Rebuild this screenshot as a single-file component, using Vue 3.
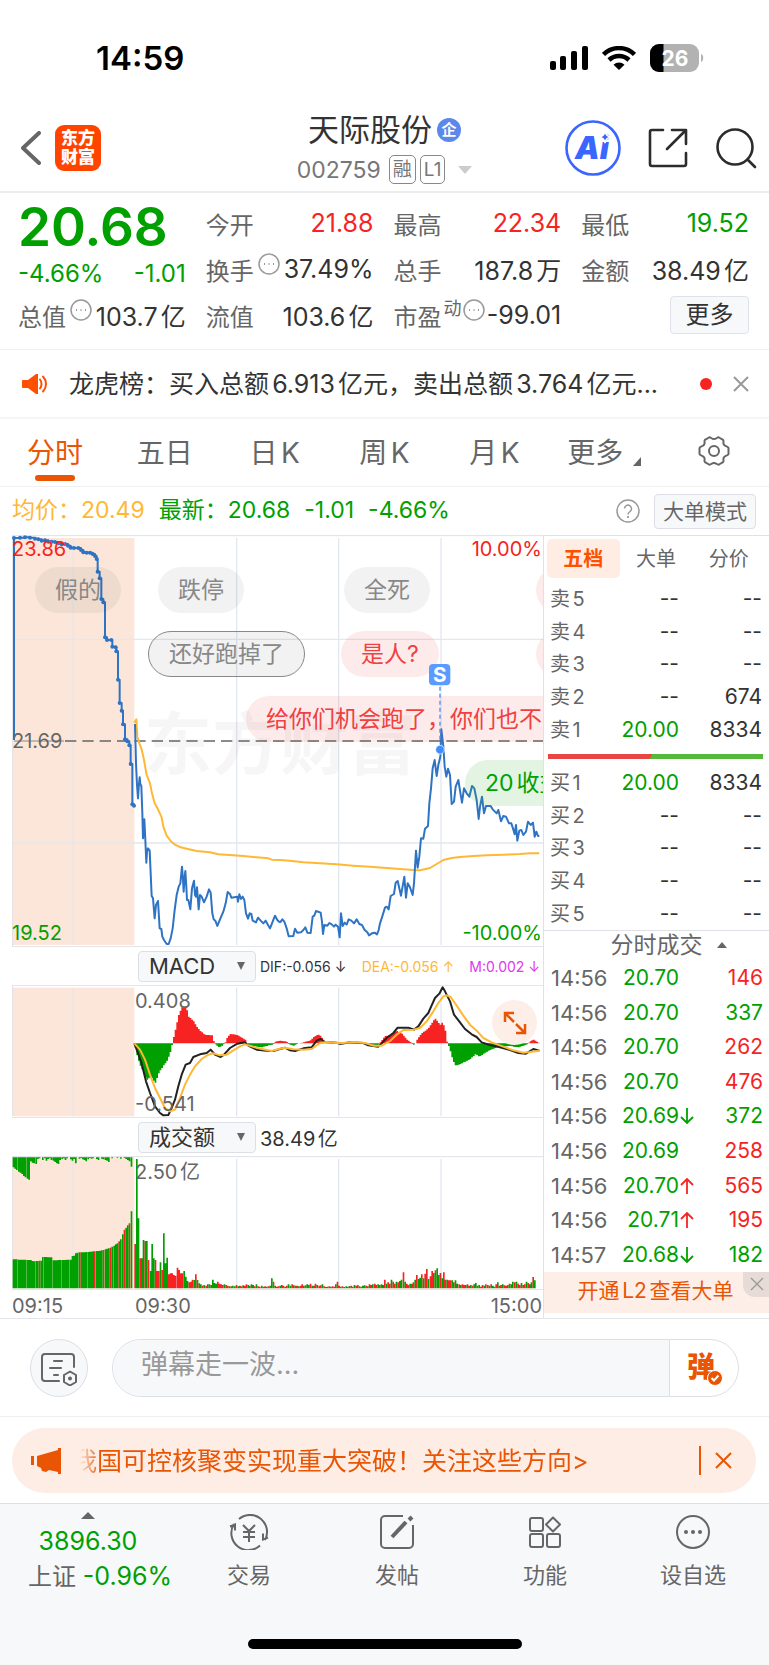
<script setup>
import { ref, computed } from 'vue'

const tabs = ['分时', '五日', '日K', '周K', '月K', '更多']
const activeTab = ref('分时')

const sideTabs = ['五档', '大单', '分价']
const activeSide = ref('五档')

const indicator = ref('MACD')
const volumeType = ref('成交额')
const message = ref('')

const sells = [
  { label: '卖5', price: '--', qty: '--' },
  { label: '卖4', price: '--', qty: '--' },
  { label: '卖3', price: '--', qty: '--' },
  { label: '卖2', price: '--', qty: '674' },
  { label: '卖1', price: '20.00', qty: '8334' }
]

const buys = [
  { label: '买1', price: '20.00', qty: '8334' },
  { label: '买2', price: '--', qty: '--' },
  { label: '买3', price: '--', qty: '--' },
  { label: '买4', price: '--', qty: '--' },
  { label: '买5', price: '--', qty: '--' }
]

const trades = [
  { time: '14:56', price: '20.70', dir: '', qty: 146, side: 'up' },
  { time: '14:56', price: '20.70', dir: '', qty: 337, side: 'down' },
  { time: '14:56', price: '20.70', dir: '', qty: 262, side: 'up' },
  { time: '14:56', price: '20.70', dir: '', qty: 476, side: 'up' },
  { time: '14:56', price: '20.69', dir: 'down', qty: 372, side: 'down' },
  { time: '14:56', price: '20.69', dir: '', qty: 258, side: 'up' },
  { time: '14:56', price: '20.70', dir: 'up', qty: 565, side: 'up' },
  { time: '14:56', price: '20.71', dir: 'up', qty: 195, side: 'up' },
  { time: '14:57', price: '20.68', dir: 'down', qty: 182, side: 'down' }
]

// 集合竞价
const auction = [
  [42, 24], [60, 23], [75, 22], [90, 23], [105, 26], [115, 28], [125, 32], [135, 31], [145, 35], [155, 35],
  [165, 36], [175, 40], [185, 43], [195, 42], [204, 47], [212, 53], [222, 54], [235, 54], [243, 60], [250, 67],
  [260, 68], [270, 68], [278, 72], [285, 78], [290, 87], [293, 125], [299, 145], [304, 207], [310, 217],
  [315, 322], [321, 330], [334, 330], [337, 350], [347, 352], [349, 364], [354, 449], [359, 519], [365, 542],
  [369, 583], [375, 628], [382, 634], [388, 646], [392, 702], [397, 823], [402, 827]
]
const auctionPath = computed(() =>
  'M42 630V24' + auction.map(([x, y]) => `H${x}V${y}`).join('')
)

// 分时价格，下午段 x 轴从 810 开始
const priceEarly = '405,582 408,700 411,765 414,805 417,760 419,742 421,762 424,768 427,850 429,925 431,900 433,868 436,930 439,998 441,965 444,955 449,962 452,1030 455,1098 459,1105 464,1165 468,1125 474,1113 479,1195 484,1197 487,1220 492,1230 500,1242 506,1242 512,1225 518,1195 524,1140 530,1095 536,1070 541,1060 546,1010 549,1050 551,1085 554,1040 556,1023 559,1070 561,1110 565,1110 571,1138 576,1075 582,1052 585,1095 588,1100 591,1072 596,1138 600,1095 605,1100 612,1117 620,1100 627,1078 632,1088 637,1150 641,1168 646,1172 652,1188 660,1168 670,1145 677,1120 683,1086 690,1092 694,1103 712,1100 714,1115 718,1093 723,1107 728,1100 733,1110 738,1150 744,1166 749,1150 754,1152 758,1172 768,1177 774,1163 782,1172 790,1180 797,1172 804,1185 810,1195 818,1175 825,1157 832,1170 840,1178'
const priceLate = '30,1178 37,1168 43,1175 50,1195 56,1219 70,1218 75,1196 82,1208 93,1207 100,1200 106,1192 112,1208 122,1209 128,1160 133,1157 138,1143 152,1148 156,1175 159,1212 163,1185 172,1187 178,1179 185,1183 192,1190 197,1184 204,1190 209,1222 213,1150 218,1188 224,1178 230,1184 236,1168 244,1172 252,1180 260,1168 268,1182 276,1185 284,1200 292,1207 297,1216 306,1210 314,1208 321,1213 326,1200 330,1180 336,1162 345,1133 350,1130 356,1138 362,1098 372,1092 377,1058 383,1053 393,1097 403,1040 408,1103 413,1060 420,1072 428,1095 432,1060 438,962 443,1013 448,980 453,925 460,926 465,896 474,888 478,820 483,775 488,715 494,690 500,738 505,705 511,680 514,598 520,650 524,710 529,740 534,716 540,735 545,822 552,815 557,770 565,750 570,782 576,818 582,775 590,790 598,800 606,768 613,775 620,810 626,867 630,830 636,800 642,850 648,828 662,828 668,838 680,850 685,840 693,874 700,858 708,860 717,880 724,880 731,902 734,913 738,885 742,932 748,902 754,900 760,915 768,905 774,875 782,885 789,878 794,920 799,905 804,918 808,918'
const avgEarly = '403,578 409,568 412,620 418,640 425,658 432,690 440,735 450,760 456,790 464,820 474,838 485,862 490,890 500,917 512,933 525,944 540,951 560,956 590,963 630,967 655,973 700,976 730,978 770,982 805,985 815,989 840,990'
const avgLate = '30,990 60,992 100,997 150,1000 200,1003 250,1007 300,1010 350,1014 390,1017 430,1020 450,1021 480,1014 495,1005 520,990 545,984 570,981 600,979 650,976 700,974 750,972 780,970 808,970'

// MACD
const difEarly = '403,311 412,335 425,372 438,425 450,460 465,500 480,520 490,527 505,526 515,505 525,480 535,440 545,405 557,375 570,370 580,352 600,344 620,340 632,330 645,345 662,352 672,345 690,325 712,312 735,308 745,318 770,330 800,333 820,334 840,328'
const difLate = '30,328 45,324 60,332 75,334 100,326 125,323 140,303 152,298 165,307 200,309 210,313 240,308 280,310 295,317 325,321 335,311 350,295 370,280 383,264 415,264 432,270 445,260 460,237 475,220 485,197 495,175 508,162 518,143 525,155 540,185 552,225 570,248 585,268 605,284 620,292 635,308 660,316 690,323 720,331 745,340 768,342 790,328 808,333'
const deaEarly = '403,311 420,330 435,360 450,405 465,445 480,475 495,505 510,515 525,510 540,475 555,435 570,405 585,380 605,358 625,345 640,341 660,347 680,345 700,332 720,320 735,314 755,320 775,326 815,334 840,327'
const deaLate = '30,327 45,324 70,329 100,330 125,328 150,310 170,307 210,311 250,307 285,310 310,318 335,318 360,304 380,285 400,271 430,270 450,265 470,245 490,215 505,190 520,170 530,167 542,172 560,198 580,228 600,255 620,273 640,295 665,308 700,321 730,332 760,339 780,337 808,333'

const hist = [
  [403, 0], [411, -35], [420, -65], [440, -110], [452, -100], [466, -118], [478, -85], [492, -65], [500, -55],
  [510, -30], [516, -5], [520, 15], [527, 45], [536, 85], [545, 108], [558, 110], [566, 80], [580, 68],
  [590, 50], [600, 38], [615, 26], [636, 24], [643, 0], [648, -5], [657, -12], [668, -6], [675, 0], [680, 15],
  [690, 28], [710, 26], [725, 18], [738, 10], [742, -3], [760, -8], [785, -12], [800, -8], [820, -3], [826, 5],
  [840, 8], [860, 5], [865, -2], [880, -8], [890, -2], [905, 2], [930, 8], [940, 18], [955, 27], [965, 20],
  [970, 5], [980, 2], [1010, 1], [1020, -4], [1030, 1], [1080, 2], [1095, 1], [1110, -3], [1135, -6],
  [1142, 5], [1155, 22], [1170, 25], [1190, 37], [1205, 30], [1220, 12], [1232, 3], [1238, -4], [1245, -3],
  [1250, 10], [1265, 30], [1285, 45], [1295, 60], [1305, 75], [1313, 65], [1320, 55], [1327, 63], [1335, 45],
  [1340, 8], [1345, -5], [1350, -20], [1358, -50], [1367, -68], [1385, -60], [1410, -48], [1427, -32],
  [1438, -40], [1460, -25], [1490, -12], [1530, -8], [1555, -12], [1580, -4], [1588, 4], [1600, 12],
  [1610, 5], [1618, 1]
]

const valueAt = (list, x) => {
  for (let i = 1; i < list.length; i++) {
    const [x1, y1] = list[i]
    const [x0, y0] = list[i - 1]
    if (x <= x1) return y0 + ((y1 - y0) * (x - x0)) / (x1 - x0)
  }
  return list[list.length - 1][1]
}

const histBars = computed(() => {
  let red = ''
  let green = ''
  for (let x = 404; x < 1618; x += 5) {
    const v = Math.round(valueAt(hist, x + 2))
    if (v > 0) red += `M${x} 311v${-v}h5v${v}z`
    if (v < 0) green += `M${x} 311v${-v}h5v${v}z`
  }
  return { red, green }
})

// 竞价量
const auctionVol = [
  [38, 958], [90, 960], [96, 964], [122, 962], [126, 951], [152, 952], [156, 961], [210, 959], [214, 948],
  [222, 946], [226, 938], [260, 936], [300, 932], [330, 923], [350, 910], [362, 895], [370, 870], [378, 860],
  [386, 850], [391, 825], [396, 770]
]
const auctionRed = [15, 39, 47, 52, 56, 61, 64, 67]
const unmatched = [30, 34, 38, 43, 46, 50, 56, 60, 64, 67, 12, 16, 18, 20, 5, 3, 0, 8, 3, 10, 5, 3, 8, 10, 14, 18, 20, 8, 5, 3, 8, 3, 0, 6, 10, 5, 18, 0, 4, 2, 6, 8, 12, 6, 2, 4, 3, 0, 5, 8, 0, 4, 6, 8, 10, 14, 0, 3, 0, 0, 2, 0, 4, 0, 2, 5, 8, 12, 28]

// 成交额
const volume = [
  133, 388, 210, 90, 90, 145, 142, 142, 85, 52, 133, 90, 85, 52, 52, 78, 55, 165, 75, 92,
  42, 45, 45, 40, 38, 62, 55, 45, 45, 52, 35, 22, 18, 20, 26, 25, 42, 25, 15, 12,
  8, 10, 8, 12, 12, 10, 26, 16, 14, 20, 14, 12, 10, 12, 10, 8, 6, 6, 8, 6,
  10, 6, 8, 6, 9, 8, 12, 10, 8, 12, 10, 6, 12, 6, 5, 8, 5, 6, 5, 6,
  8, 30, 20, 8, 5, 6, 8, 10, 8, 5, 8, 12, 8, 12, 9, 8, 8, 6, 8, 12,
  8, 9, 12, 10, 14, 8, 8, 14, 10, 8, 9, 12, 6, 4, 5, 6, 5, 6, 5, 12,
  20, 8, 5, 6, 4, 6, 5, 7, 8, 5, 10, 8, 10, 6, 5, 8, 9, 8, 6, 12,
  10, 12, 14, 10, 12, 10, 12, 10, 26, 14, 18, 14, 26, 20, 14, 20, 18, 22, 26, 48,
  20, 14, 10, 14, 14, 18, 26, 40, 28, 32, 42, 30, 44, 58, 28, 36, 52, 46, 54, 60,
  40, 46, 30, 48, 26, 26, 24, 24, 24, 18, 24, 14, 12, 10, 12, 10, 10, 12, 8, 10,
  8, 12, 16, 8, 10, 5, 10, 8, 12, 10, 8, 12, 8, 5, 12, 18, 8, 10, 12, 9,
  8, 10, 14, 12, 20, 18, 20, 14, 10, 16, 10, 12, 20, 16, 12, 18, 34, 24
]
const openColors = 'rggrggrgrgggrrrgrgggrrrrrrrrrgggrrrgrgrgrgrgrggggrrr'

const volumeBars = computed(() => {
  let red = ''
  let green = ''
  for (let i = 0; i < 69; i++) {
    const x = Math.round(38 + i * 5.2)
    const h = 1045 - Math.round(valueAt(auctionVol, x))
    const bar = `M${x} 1045v${-h}h5v${h}z`
    if (auctionRed.includes(i)) red += bar
    else green += bar
    green += `M${x} 652v${unmatched[i]}h5v${-unmatched[i]}z`
  }
  volume.forEach((h, i) => {
    const x = Math.round(403 + i * 5.06)
    const bar = `M${x} 1045v${-h}h5v${h}z`
    const isRed = i < openColors.length ? openColors[i] === 'r' : (i * 7) % 11 < 6
    if (isRed) red += bar
    else green += bar
  })
  return { red, green }
})
</script>

<template>
  <div class="page">
    <div class="status">
      <span class="clock">14:59</span>
      <div class="status-icons">
        <svg width="38" height="24" viewBox="0 0 38 24">
          <rect x="0" y="15" width="6" height="9" rx="2" />
          <rect x="10" y="10" width="6" height="14" rx="2" />
          <rect x="21" y="5" width="6" height="19" rx="2" />
          <rect x="32" y="0" width="6" height="24" rx="2" />
        </svg>
        <svg width="34" height="24" viewBox="0 0 34 24">
          <path d="M1.500 8.500a22 22 0 0 1 31 0" fill="none" stroke="#000" stroke-width="4.500" />
          <path d="M7 14a14.500 14.500 0 0 1 20 0" fill="none" stroke="#000" stroke-width="4.500" />
          <path d="M17 24l-5.500-5.300a8 8 0 0 1 11 0z" />
        </svg>
        <svg width="54" height="28" viewBox="0 0 54 28">
          <rect width="49" height="28" rx="9" fill="#b2b2b2" />
          <path d="M9 0h4.500v28H9a9 9 0 0 1-9-9V9a9 9 0 0 1 9-9z" />
          <path d="M51 10c3 1 3 7 0 8z" fill="#b2b2b2" />
          <text x="25" y="22" text-anchor="middle" class="battery-text">26</text>
        </svg>
      </div>
    </div>

    <header class="header">
      <div class="head-left">
        <button class="plain" aria-label="返回">
          <svg width="20" height="34" viewBox="0 0 20 34">
            <path d="M18 2L2 17l16 15" fill="none" stroke="#666" stroke-width="4" stroke-linecap="round" stroke-linejoin="round" />
          </svg>
        </button>
        <div class="logo">东方<br>财富</div>
      </div>
      <div class="head-title">
        <h1>天际股份<span class="corp">企</span></h1>
        <div class="code">
          002759
          <span class="tags"><span class="tag">融</span><span class="tag">L1</span></span>
          <svg width="14" height="8" viewBox="0 0 14 8"><path d="M0 0h14L7 8z" fill="#ccc" /></svg>
        </div>
      </div>
      <div class="head-right">
        <button class="plain" aria-label="AI">
          <svg width="56" height="56" viewBox="0 0 56 56">
            <circle cx="28" cy="28" r="26.500" fill="none" stroke="#3a66ff" stroke-width="2.600" />
            <text x="27" y="39" text-anchor="middle" class="ai-text">Ai</text>
            <path d="M40 11c1 4 2 5 6 6-4 1-5 2-6 6-1-4-2-5-6-6 4-1 5-2 6-6z" fill="#3a66ff" stroke="#fff" stroke-width="1.500" />
          </svg>
        </button>
        <button class="plain" aria-label="分享">
          <svg width="40" height="40" viewBox="0 0 40 40" fill="none" stroke="#2c2c2c" stroke-width="2.600" stroke-linecap="round" stroke-linejoin="round">
            <path d="M15 2H4a2 2 0 0 0-2 2v32a2 2 0 0 0 2 2h32a2 2 0 0 0 2-2V25M24 2h14v14M37 3L19 21" />
          </svg>
        </button>
        <button class="plain" aria-label="搜索">
          <svg width="42" height="42" viewBox="0 0 42 42" fill="none" stroke="#2c2c2c" stroke-width="2.600" stroke-linecap="round">
            <circle cx="20" cy="20" r="17.500" />
            <path d="M32.500 32.500L40 40" />
          </svg>
        </button>
      </div>
    </header>

    <section class="quote">
      <div class="quote-col">
        <div class="price">20.68</div>
        <div class="change green"><span>-4.66%</span><span>-1.01</span></div>
        <div class="item">
          <span>总值</span>
          <svg class="dots" viewBox="0 0 22 22"><circle cx="11" cy="11" r="10" /><path d="M6 11h1M10.500 11h1M15 11h1" /></svg>
          <b>103.7亿</b>
        </div>
      </div>
      <div class="quote-col">
        <div class="item"><span>今开</span><b class="red">21.88</b></div>
        <div class="item">
          <span>换手</span>
          <svg class="dots" viewBox="0 0 22 22"><circle cx="11" cy="11" r="10" /><path d="M6 11h1M10.500 11h1M15 11h1" /></svg>
          <b>37.49%</b>
        </div>
        <div class="item"><span>流值</span><b>103.6亿</b></div>
      </div>
      <div class="quote-col">
        <div class="item"><span>最高</span><b class="red">22.34</b></div>
        <div class="item"><span>总手</span><b>187.8万</b></div>
        <div class="item">
          <span>市盈</span><sup>动</sup>
          <svg class="dots tight" viewBox="0 0 22 22"><circle cx="11" cy="11" r="10" /><path d="M6 11h1M10.500 11h1M15 11h1" /></svg>
          <b>-99.01</b>
        </div>
      </div>
      <div class="quote-col">
        <div class="item"><span>最低</span><b class="green">19.52</b></div>
        <div class="item"><span>金额</span><b>38.49亿</b></div>
        <div class="item"><button class="more">更多</button></div>
      </div>
    </section>

    <div class="news">
      <svg width="26" height="22" viewBox="0 0 26 22">
        <path d="M1 7h5l8-6h2v20h-2l-8-6H1a1 1 0 0 1-1-1V8a1 1 0 0 1 1-1z" fill="#ff5000" />
        <path d="M18 6.500c2 2.500 2 6.500 0 9M21 3.500c4 4.500 4 10.500 0 15" fill="none" stroke="#ff5000" stroke-width="2" stroke-linecap="round" />
      </svg>
      <a href="#" class="news-text">龙虎榜：买入总额6.913亿元，卖出总额3.764亿元...</a>
      <i class="dot"></i>
      <button class="plain" aria-label="关闭">
        <svg width="16" height="16" viewBox="0 0 16 16"><path d="M1 1l14 14M15 1L1 15" stroke="#999" stroke-width="2" /></svg>
      </button>
    </div>

    <nav class="tabs">
      <button v-for="t in tabs" :key="t" class="tab" :class="{ active: t === activeTab }" @click="activeTab = t">
        <span>{{ t }}</span>
        <svg v-if="t === '更多'" width="8" height="9" viewBox="0 0 8 9"><path d="M8 0v9H0z" fill="#666" /></svg>
      </button>
      <button class="tab" aria-label="设置">
        <svg width="32" height="30" viewBox="0 0 32 30" fill="none" stroke="#666" stroke-width="2">
          <path d="M11 1.500c1.500-.8 2.500 1.500 5 1.500s3.500-2.300 5-1.500l4 2.300c1.300 1-.3 2.700.8 4.700 1.200 2.200 4.200 1.500 4.700 3.500v6c-.5 2-3.500 1.300-4.700 3.500-1.100 2 .5 3.700-.8 4.700l-4 2.300c-1.500.8-2.500-1.500-5-1.500s-3.500 2.300-5 1.500l-4-2.300c-1.300-1 .3-2.700-.8-4.700C5 19.300 2 20 1.500 18v-6c.5-2 3.500-1.300 4.700-3.500 1.100-2-.5-3.700.8-4.700z" />
          <circle cx="16" cy="15" r="5" />
        </svg>
      </button>
    </nav>

    <div class="summary">
      <span class="yellow">均价：20.49</span>
      <span class="green">最新：20.68</span>
      <span class="green">-1.01</span>
      <span class="green">-4.66%</span>
      <button class="plain help" aria-label="帮助">
        <svg width="24" height="24" viewBox="0 0 24 24" fill="none" stroke="#999">
          <circle cx="12" cy="12" r="11" stroke-width="1.500" />
          <path d="M8.500 9.500a3.500 3.500 0 1 1 5.500 3c-1.500 1-2 1.500-2 3" stroke-width="1.500" />
          <path d="M12 17v2" stroke-width="1.800" />
        </svg>
      </button>
      <button class="mode">大单模式</button>
    </div>

    <main class="board">
      <div class="charts">
        <div class="panel">
          <svg class="plot" viewBox="36 15 1593 1236">
            <rect x="38" y="24" width="365" height="1221" fill="#fce6da" />
            <path d="M219 24V1245M710 24V1245M1016 24V1245M1323 24V1245M36 328H1629M36 939H1629" class="grid" />
            <path d="M36 17H1629M38 17V1250M36 1250H1629" class="frame" />
            <text x="432" y="716" class="watermark">东方财富</text>
            <path d="M195 633H1629" stroke="#666" stroke-width="4" stroke-dasharray="34 18" fill="none" />
            <path d="M42 633h150" stroke="#888" stroke-width="3" />
            <polyline :points="avgEarly" class="line avg" />
            <polyline :points="avgLate" class="line avg" transform="translate(810 0)" />
            <path :d="auctionPath" class="line price-line" />
            <circle v-for="p in auction" :key="p[0]" :cx="p[0]" :cy="p[1]" r="6" fill="#2f74c4" />
            <polyline :points="priceEarly" class="line price-line" />
            <polyline :points="priceLate" class="line price-line" transform="translate(810 0)" />
          </svg>
          <span class="label top left red">23.86</span>
          <span class="label middle left">21.69</span>
          <span class="label bottom left green">19.52</span>
          <span class="label top right red">10.00%</span>
          <span class="label bottom right green">-10.00%</span>
          <div class="danmu">
            <span class="pill r1 a">假的</span>
            <span class="pill r1 b">跌停</span>
            <span class="pill r1 c">全死</span>
            <span class="pill r1 d hot"></span>
            <span class="pill r2 e mine">还好跑掉了</span>
            <span class="pill r2 f hot">是人?</span>
            <span class="pill r2 d hot"></span>
            <span class="pill r3 g hot">给你们机会跑了，你们也不</span>
            <span class="pill r4 h cool">20收益</span>
          </div>
          <svg class="plot marker" viewBox="36 15 1593 1236">
            <path d="M1320 470V640" stroke="#4a8ff5" stroke-width="4" stroke-dasharray="12 9" />
            <circle cx="1320" cy="659" r="13" fill="#3f8cff" stroke="#fff" stroke-width="2" />
            <rect x="1287" y="402" width="64" height="64" rx="12" fill="#5b9bff" />
            <text x="1319" y="456" text-anchor="middle" class="marker-text">S</text>
          </svg>
        </div>

        <div class="tool">
          <div class="picker">
            <select v-model="indicator" aria-label="指标"><option>MACD</option><option>KDJ</option></select>
            <svg width="8" height="8" viewBox="0 0 8 8"><path d="M0 0h8L4 8z" fill="#666" /></svg>
          </div>
          <div class="macd-values">
            <span>DIF:-0.056 ↓</span>
            <span class="yellow">DEA:-0.056 ↑</span>
            <span class="magenta">M:0.002 ↓</span>
          </div>
        </div>

        <div class="panel">
          <svg class="plot" viewBox="36 136 1593 399">
            <rect x="38" y="144" width="365" height="386" fill="#fce6da" />
            <path d="M219 144V530M710 144V530M1016 144V530M1323 144V530" class="grid" />
            <path d="M36 137H1629M38 137V530M36 534H1629" class="frame" />
            <path :d="histBars.red" fill="#f72323" />
            <path :d="histBars.green" fill="#00a000" />
            <polyline :points="difEarly" class="line dif" />
            <polyline :points="difLate" class="line dif" transform="translate(810 0)" />
            <polyline :points="deaEarly" class="line avg" />
            <polyline :points="deaLate" class="line avg" transform="translate(810 0)" />
          </svg>
          <span class="label top open">0.408</span>
          <span class="label bottom open">-0.541</span>
          <button class="expand" aria-label="放大">
            <svg width="24" height="24" viewBox="0 0 24 24" fill="none" stroke="#ea5504" stroke-width="2.500">
              <path d="M11 2H2v9M2 2l9 9M22 13v9h-9M22 22l-9-9" />
            </svg>
          </button>
        </div>

        <div class="tool">
          <div class="picker">
            <select v-model="volumeType" aria-label="成交"><option>成交额</option><option>成交量</option></select>
            <svg width="8" height="8" viewBox="0 0 8 8"><path d="M0 0h8L4 8z" fill="#666" /></svg>
          </div>
          <span class="turnover">38.49亿</span>
        </div>

        <div class="panel">
          <svg class="plot" viewBox="36 648 1593 402">
            <rect x="38" y="652" width="365" height="393" fill="#fce6da" />
            <path d="M219 656V1045M710 656V1045M1016 656V1045M1323 656V1045" class="grid" />
            <path d="M36 650H1629M38 650V1045M36 1049H1629" class="frame" />
            <path :d="volumeBars.red" fill="#f72323" />
            <path :d="volumeBars.green" fill="#00a000" />
          </svg>
          <span class="label top open">2.50亿</span>
        </div>
        <div class="axis">
          <span>09:15</span>
          <span class="axis-open">09:30</span>
          <span>15:00</span>
        </div>
      </div>

      <aside class="side">
        <div class="side-tabs">
          <button v-for="t in sideTabs" :key="t" :class="{ active: t === activeSide }" @click="activeSide = t">{{ t }}</button>
        </div>
        <table class="levels">
          <tr v-for="r in sells" :key="r.label">
            <td>{{ r.label }}</td>
            <td :class="{ green: r.price !== '--' }">{{ r.price }}</td>
            <td>{{ r.qty }}</td>
          </tr>
        </table>
        <div class="ratio"></div>
        <table class="levels">
          <tr v-for="r in buys" :key="r.label">
            <td>{{ r.label }}</td>
            <td :class="{ green: r.price !== '--' }">{{ r.price }}</td>
            <td>{{ r.qty }}</td>
          </tr>
        </table>
        <button class="deal-head">
          分时成交
          <svg width="10" height="6" viewBox="0 0 10 6"><path d="M0 6h10L5 0z" fill="#666" /></svg>
        </button>
        <table class="deals">
          <tr v-for="(t, i) in trades" :key="i">
            <td>{{ t.time }}</td>
            <td class="green">{{ t.price }}</td>
            <td class="arrow">
              <svg v-if="t.dir === 'down'" width="14" height="16" viewBox="0 0 14 16"><path d="M7 0v15M1 9l6 6 6-6" stroke="#00a000" /></svg>
              <svg v-if="t.dir === 'up'" width="14" height="16" viewBox="0 0 14 16"><path d="M7 16V1M1 7l6-6 6 6" stroke="#f72323" /></svg>
            </td>
            <td :class="t.side === 'up' ? 'red' : 'green'">{{ t.qty }}</td>
          </tr>
        </table>
        <div class="l2">
          <a href="#">开通L2查看大单</a>
          <button aria-label="关闭">
            <svg width="14" height="14" viewBox="0 0 14 14"><path d="M1 1l12 12M13 1L1 13" stroke="#999" stroke-width="1.300" /></svg>
          </button>
        </div>
      </aside>
    </main>

    <div class="chat">
      <button class="chat-set" aria-label="弹幕设置">
        <svg width="36" height="33" viewBox="0 0 36 33" fill="none" stroke="#666" stroke-width="2" stroke-linecap="round">
          <path d="M18 28H4a3 3 0 0 1-3-3V4a3 3 0 0 1 3-3h26a3 3 0 0 1 3 3v10M13 8h8M9 15h11M13 22h4" />
          <path d="M29 18.500l6 3.500v7l-6 3.500-6-3.500v-7z" stroke-linejoin="round" />
          <circle cx="29" cy="25.500" r="1" fill="#666" />
        </svg>
      </button>
      <div class="chat-box">
        <input v-model="message" placeholder="弹幕走一波..." aria-label="弹幕">
        <button class="send" aria-label="弹">
          <span>弹</span>
          <svg width="16" height="16" viewBox="0 0 16 16">
            <circle cx="8" cy="8" r="7.500" fill="#ea5504" stroke="#fff" />
            <path d="M4.500 8l2.500 2.500 4.500-5" fill="none" stroke="#fff" stroke-width="2" />
          </svg>
        </button>
      </div>
    </div>

    <div class="promo-row">
      <div class="promo">
        <svg width="30" height="26" viewBox="0 0 30 26" fill="#ea5504">
          <path d="M0 8h3v9H0zM6 8l21-6V0h3v26h-3v-2l-9-2-3 2-4-1-1-3-4-2z" />
        </svg>
        <a href="#" class="ticker"><span>我国可控核聚变实现重大突破！关注这些方向&gt;</span></a>
        <i></i>
        <button class="plain" aria-label="关闭">
          <svg width="17" height="17" viewBox="0 0 17 17"><path d="M1 1l15 15M16 1L1 16" stroke="#ea5504" stroke-width="2" /></svg>
        </button>
      </div>
    </div>

    <footer class="dock">
      <div class="bar">
        <button class="index">
          <svg width="14" height="7" viewBox="0 0 14 7"><path d="M0 7h14L7 0z" fill="#666" /></svg>
          <span class="green">3896.30</span>
          <span class="index-line">上证 <span class="green">-0.96%</span></span>
        </button>
        <button class="entry">
          <svg width="40" height="36" viewBox="0 0 40 36" fill="none" stroke="#666" stroke-width="2">
            <path d="M10 5a17 17 0 0 1 26 21M31 31.500A17 17 0 0 1 5 10M1 12.500l5-2v6M39 23.500l-5 2v-6M14 11l6 6 6-6M14 18h12M14 23h12M20 17v11" />
          </svg>
          交易
        </button>
        <button class="entry">
          <svg width="36" height="36" viewBox="0 0 36 36" fill="none" stroke="#666" stroke-width="2">
            <path d="M24 2H6a4 4 0 0 0-4 4v24a4 4 0 0 0 4 4h24a4 4 0 0 0 4-4V11" />
            <path d="M13 23L27 8" stroke-width="4" /><path d="M30 6l3-3" stroke-width="4" />
          </svg>
          发帖
        </button>
        <button class="entry">
          <svg width="36" height="36" viewBox="0 0 36 36" fill="none" stroke="#666" stroke-width="2" stroke-linejoin="round">
            <rect x="3" y="4" width="13" height="13" rx="2" />
            <rect x="3" y="20" width="13" height="13" rx="2" />
            <rect x="20" y="20" width="13" height="13" rx="2" />
            <path d="M26 3.500l7 7-7 7-7-7z" />
          </svg>
          功能
        </button>
        <button class="entry">
          <svg width="36" height="36" viewBox="0 0 36 36" fill="none" stroke="#666" stroke-width="2">
            <circle cx="18" cy="18" r="16" />
            <g fill="#666" stroke="none"><circle cx="11" cy="18" r="2" /><circle cx="18" cy="18" r="2" /><circle cx="25" cy="18" r="2" /></g>
          </svg>
          设自选
        </button>
      </div>
      <div class="home"></div>
    </footer>
  </div>
</template>

<style>
body {
  margin: 0;
  background: #fff;
}
</style>

<style scoped>
.page {
  font-family: Inter, "Noto Sans CJK SC", sans-serif;
  color: #333;
  text-autospace: normal;
  overflow: hidden;
}

.page * {
  box-sizing: border-box;
}

svg {
  display: block;
  flex: none;
}

button,
input,
select {
  font-family: inherit;
  color: inherit;
  padding: 0;
  margin: 0;
  border: 0;
  background: none;
}

a {
  color: inherit;
  text-decoration: none;
}

.plain {
  display: block;
}

.red {
  color: #f72323 !important;
}

.green {
  color: #00a000 !important;
}

.yellow {
  color: #ffb834;
}

.magenta {
  color: #e335ef;
}

/* 状态栏 */
.status {
  height: 100px;
  padding: 15px 65px 0 96px;
  display: flex;
  align-items: center;
  justify-content: space-between;
}

.clock {
  color: #000;
  font-size: 33px;
  font-weight: 600;
}

.status-icons {
  display: flex;
  align-items: center;
  gap: 14px;
}

.battery-text {
  font-size: 21px;
  font-weight: 700;
  fill: #fff;
}

/* 标题栏 */
.header {
  height: 93px;
  padding: 4px 12px 0;
  display: grid;
  grid-template-columns: 1fr auto 1fr;
  align-items: center;
  border-bottom: 2px solid #ededed;
}

.head-left {
  display: flex;
  align-items: center;
  gap: 14px;
  padding-left: 9px;
}

.logo {
  width: 46px;
  height: 46px;
  border-radius: 9px;
  background: #ff4400;
  color: #fff;
  font-size: 17px;
  font-weight: 900;
  line-height: 19px;
  padding-top: 4px;
  text-align: center;
}

.head-title {
  display: flex;
  flex-direction: column;
  align-items: center;
}

h1 {
  margin: 0;
  display: flex;
  align-items: center;
  gap: 5px;
  font-size: 31px;
  font-weight: 400;
  line-height: 44px;
}

.corp {
  width: 24px;
  height: 24px;
  border-radius: 50%;
  background: #5b88ea;
  color: #fff;
  font-size: 15px;
  font-weight: 700;
  line-height: 24px;
  text-align: center;
}

.code {
  display: flex;
  align-items: center;
  gap: 8px;
  font-size: 23px;
  line-height: 36px;
  color: #777;
}

.tags {
  display: flex;
  gap: 4px;
  margin-right: 5px;
}

.tag {
  height: 29px;
  padding: 0 3px;
  border: 1px solid #888;
  border-radius: 5px;
  font-size: 19px;
  line-height: 27px;
}

.head-right {
  display: flex;
  align-items: center;
  justify-content: flex-end;
  gap: 27px;
}

.ai-text {
  font-size: 31px;
  font-weight: 900;
  font-style: italic;
  fill: #3a66ff;
}

/* 行情 */
.quote {
  display: grid;
  grid-template-columns: repeat(4, minmax(0, 1fr));
  gap: 20px;
  height: 157px;
  padding: 7px 20px 0 18px;
  border-bottom: 1px solid #f0f0f0;
}

.price {
  color: #00a000;
  font-size: 53px;
  font-weight: 600;
  line-height: 54px;
}

.change {
  height: 38px;
  display: flex;
  align-items: center;
  justify-content: space-between;
  font-size: 24px;
}

.item {
  height: 46px;
  display: flex;
  align-items: center;
  font-size: 24px;
  white-space: nowrap;
  color: #666;
}

.item b {
  margin-left: auto;
  font-size: 25px;
  font-weight: 400;
  color: #333;
}

.item sup {
  font-size: 18px;
  line-height: 18px;
  align-self: flex-start;
  margin: 8px 0 0 2px;
}

.dots {
  width: 22px;
  height: 22px;
  margin: 0 0 10px 4px;
  fill: none;
  stroke: #999;
  stroke-width: 1.5;
}

.dots path {
  stroke-width: 2;
}

.dots.tight {
  margin-left: 1px;
}

.more {
  width: 79px;
  height: 38px;
  margin-left: auto;
  border: 1px solid #dfe2ea;
  border-radius: 4px;
  background: #f7f8fa;
  font-size: 24px;
  line-height: 34px;
  color: #333;
}

/* 公告 */
.news {
  height: 69px;
  padding: 0 20px 0 22px;
  display: flex;
  align-items: center;
  border-bottom: 2px solid #f5f5f5;
}

.news-text {
  flex: 1;
  margin-left: 21px;
  padding-bottom: 3px;
  font-size: 25px;
  white-space: nowrap;
  overflow: hidden;
}

.dot {
  width: 12px;
  height: 12px;
  border-radius: 50%;
  background: #f72323;
  margin-right: 21px;
}

/* 周期 */
.tabs {
  height: 68px;
  display: grid;
  grid-template-columns: repeat(7, minmax(0, 1fr));
  border-bottom: 1px solid #f0f0f0;
}

.tab {
  position: relative;
  display: flex;
  align-items: center;
  justify-content: center;
  gap: 10px;
  padding-bottom: 3px;
  font-size: 28px;
  color: #666;
}

.tab span + svg {
  align-self: flex-end;
  margin-bottom: 17px;
}

.tab.active {
  color: #ea5504;
}

.tab.active::after {
  content: "";
  position: absolute;
  bottom: 5px;
  left: 50%;
  width: 40px;
  height: 6px;
  margin-left: -20px;
  border-radius: 3px;
  background: #ea5504;
}

.summary {
  height: 48px;
  padding: 0 13px 0 12px;
  display: flex;
  align-items: center;
  gap: 14px;
  font-size: 23px;
  line-height: 30px;
  white-space: nowrap;
}

.summary span {
  padding-bottom: 2px;
}

.help {
  margin-left: auto;
}

.mode {
  height: 35px;
  padding: 0 8px;
  border: 1px solid #dcdfe6;
  border-radius: 4px;
  background: #f7f8fa;
  font-size: 21px;
  line-height: 31px;
  color: #666;
}

/* 图表区 */
.board {
  padding-left: 12px;
  display: grid;
  grid-template-columns: minmax(0, 531fr) minmax(0, 226fr);
  border-bottom: 1px solid #e3e5ea;
}

.panel {
  position: relative;
  overflow: hidden;
}

.plot {
  width: 100%;
}

.grid {
  fill: none;
  stroke: #e3e7f1;
  stroke-width: 4;
}

.frame {
  fill: none;
  stroke: #dfe1e6;
  stroke-width: 3;
}

.line {
  fill: none;
  stroke-width: 6;
  stroke-linejoin: round;
}

.avg {
  stroke: #ffb834;
}

.price-line {
  stroke: #2f74c4;
}

.dif {
  stroke: #222;
}

.watermark {
  font-size: 204px;
  font-weight: 700;
  fill: #000;
  fill-opacity: 0.035;
}

.marker {
  position: absolute;
  top: 0;
  left: 0;
}

.marker-text {
  font-size: 62px;
  font-weight: 700;
  fill: #fff;
}

.label {
  position: absolute;
  font-size: 20px;
  line-height: 24px;
  color: #666;
}

.label.top {
  top: 2px;
}

.label.middle {
  top: 50%;
  margin-top: -12px;
}

.label.bottom {
  bottom: 2px;
}

.label.left {
  left: 0;
}

.label.right {
  right: 1px;
}

.label.open {
  left: 123px;
}

.label.top.open {
  top: 4px;
}

/* 弹幕 */
.pill {
  position: absolute;
  height: 46px;
  min-width: 60px;
  padding: 0 20px;
  border-radius: 23px;
  background: rgba(0, 0, 0, 0.05);
  font-size: 23px;
  line-height: 46px;
  color: #888;
  white-space: nowrap;
}

.pill.hot {
  background: rgba(235, 60, 60, 0.1);
  color: #f04040;
}

.pill.cool {
  background: rgba(60, 180, 60, 0.14);
  color: #00a000;
}

.pill.mine {
  border: 1px solid #888;
  line-height: 44px;
}

.r1 { top: 32px; }
.r2 { top: 96px; }
.r3 { top: 161px; }
.r4 { top: 225px; }
.a { left: 23px; }
.b { left: 146px; }
.c { left: 332px; }
.d { left: 524px; }
.e { left: 136px; }
.f { left: 329px; }
.g { left: 234px; }
.h { left: 453px; }

.tool {
  height: 38px;
  padding-left: 126px;
  display: flex;
  align-items: center;
  gap: 4px;
}

.picker {
  position: relative;
  flex: none;
}

.picker select {
  display: block;
  appearance: none;
  width: 118px;
  height: 31px;
  padding-left: 10px;
  border: 1px solid #dcdfe6;
  border-radius: 4px;
  background: #f7f8fa;
  font-size: 22px;
}

.picker svg {
  position: absolute;
  right: 11px;
  top: 11px;
}

.macd-values {
  flex: 1;
  display: flex;
  justify-content: space-between;
  padding-right: 3px;
  font-size: 14px;
  white-space: nowrap;
}

.turnover {
  font-size: 20px;
}

.expand {
  position: absolute;
  top: 15px;
  right: 6px;
  width: 45px;
  height: 45px;
  border-radius: 50%;
  background: #fdefe8;
  display: flex;
  align-items: center;
  justify-content: center;
}

.axis {
  height: 28px;
  display: flex;
  align-items: center;
  font-size: 20px;
  color: #666;
  padding: 3px 1px 0 0;
}

.axis span:first-child {
  width: 123px;
}

.axis-open {
  flex: 1;
}

/* 盘口 */
.side {
  min-width: 0;
  border-left: 1px solid #dfe1e6;
  border-top: 1px solid #dfe1e6;
}

.side-tabs {
  display: grid;
  grid-template-columns: repeat(3, minmax(0, 1fr));
  padding: 3px 4px 0 3px;
}

.side-tabs button {
  height: 39px;
  border-radius: 5px;
  font-size: 20px;
  line-height: 36px;
  color: #666;
}

.side-tabs .active {
  background: #ffece3;
  color: #ff5000;
  font-weight: 700;
}

table {
  width: 100%;
  border-collapse: collapse;
  table-layout: fixed;
  font-size: 21px;
}

td {
  padding: 0;
  line-height: 28px;
  text-align: right;
}

td:first-child {
  text-align: left;
  color: #666;
}

.levels {
  height: 163px;
  margin-top: 5px;
}

.levels td:first-child {
  width: 56px;
  padding-left: 6px;
  font-size: 20px;
}

.levels td:last-child {
  width: 90px;
  padding-right: 7px;
}

.ratio {
  height: 5px;
  margin: 8px 6px 8px 4px;
  background: linear-gradient(120deg, #e84545 48%, #55b93c 48%);
}

.ratio + .levels {
  margin-top: 0;
}

.deal-head {
  width: 100%;
  height: 31px;
  border-top: 1px solid #dfe1e6;
  display: flex;
  align-items: center;
  justify-content: center;
  gap: 14px;
  padding: 0 0 3px 24px;
  font-size: 23px;
  line-height: 26px;
  color: #666;
}

.deals {
  height: 311px;
}

.deals td:first-child {
  width: 72px;
  padding-left: 7px;
  font-size: 22px;
}

.deals .arrow {
  width: 16px;
  padding-left: 1px;
}

.arrow path {
  fill: none;
  stroke-width: 1.8;
}

.deals td:last-child {
  width: 74px;
  padding-right: 6px;
}

.l2 {
  position: relative;
  height: 41px;
  background: #fdefe8;
  color: #ea5504;
  font-size: 21px;
  line-height: 38px;
  text-align: center;
  padding-right: 2px;
}

.l2 button {
  position: absolute;
  top: 0;
  right: 0;
  width: 26px;
  height: 25px;
  padding: 0 0 2px 7px;
  border-bottom-left-radius: 12px;
  background: #e6dbd6;
}

/* 发弹幕 */
.chat {
  padding: 20px 30px 19px;
  display: flex;
  gap: 24px;
  border-bottom: 1px solid #f0f0f0;
}

.chat-set {
  flex: none;
  width: 58px;
  height: 58px;
  padding-top: 2px;
  border: 1px solid #dcdfe6;
  border-radius: 50%;
  background: #f7f8fa;
  display: flex;
  align-items: center;
  justify-content: center;
}

.chat-box {
  flex: 1;
  height: 58px;
  display: flex;
  border: 1px solid #dcdfe6;
  border-radius: 29px;
  overflow: hidden;
}

.chat-box input {
  flex: 1;
  min-width: 0;
  padding: 0 0 7px 28px;
  background: #f7f8fa;
  font-size: 27px;
  outline: none;
}

.chat-box input::placeholder {
  color: #999;
}

.send {
  position: relative;
  width: 69px;
  border-left: 1px solid #dcdfe6;
  color: #ea5504;
  font-size: 28px;
  font-weight: 900;
  text-align: left;
  padding: 0 0 6px 17px;
}

.send svg {
  position: absolute;
  right: 15px;
  bottom: 10px;
}

.promo-row {
  padding: 11px 13px 10px 12px;
}

.promo {
  height: 65px;
  padding: 0 24px 0 19px;
  border-radius: 33px;
  background: #feede4;
  display: flex;
  align-items: center;
  color: #ea5504;
}

.ticker {
  flex: 1;
  margin-left: 19px;
  padding-bottom: 3px;
  font-size: 25px;
  white-space: nowrap;
  overflow: hidden;
  mask-image: linear-gradient(to right, transparent, #000 20px);
}

.ticker span {
  display: block;
  margin-left: -8px;
}

.promo i {
  width: 2px;
  height: 29px;
  margin-right: 14px;
  background: #ea5504;
}

/* 底部 */
.dock {
  height: 162px;
  border-top: 1px solid #dcdfe6;
  background: #f7f8fa;
  display: flex;
  flex-direction: column;
  justify-content: space-between;
  padding-bottom: 16px;
}

.bar {
  display: grid;
  grid-template-columns: minmax(0, 175fr) repeat(4, minmax(0, 148fr));
  padding-right: 2px;
}

.index {
  width: 120px;
  margin-left: 28px;
  padding-top: 8px;
  display: flex;
  flex-direction: column;
  align-items: center;
  font-size: 24px;
  line-height: 35px;
}

.index > span:first-of-type {
  margin-top: 5px;
}

.index .green {
  font-size: 25px;
}

.index-line {
  align-self: flex-start;
  white-space: nowrap;
  color: #666;
}

.entry {
  padding-top: 10px;
  display: flex;
  flex-direction: column;
  align-items: center;
  gap: 9px;
  font-size: 22px;
  line-height: 32px;
  color: #666;
}

.home {
  width: 274px;
  height: 10px;
  margin: 0 auto;
  border-radius: 5px;
  background: #000;
}
</style>
